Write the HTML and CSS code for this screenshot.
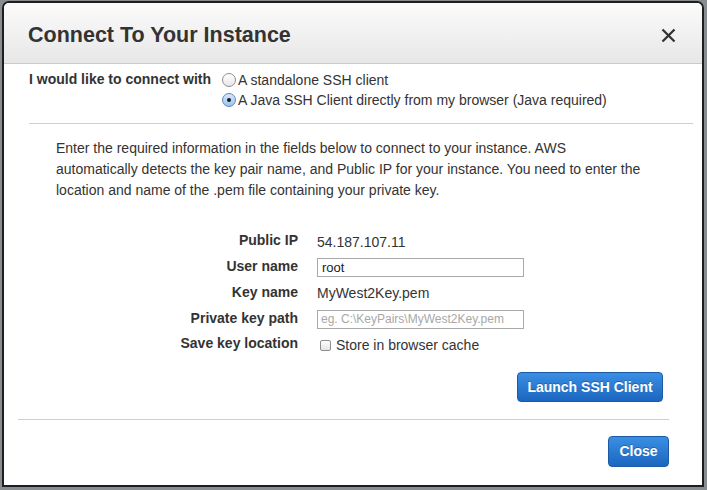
FILE: index.html
```html
<!DOCTYPE html>
<html>
<head>
<meta charset="utf-8">
<link rel="stylesheet" href="styles.css">
</head>
<body>
<div class="dialog">
  <div class="header">
    <h1 class="title">Connect To Your Instance</h1>
    <svg class="close-x" width="15" height="15" viewBox="0 0 15 15"><path d="M1.5 1.5 L13.5 13.5 M13.5 1.5 L1.5 13.5" stroke="#333" stroke-width="2.3" fill="none"/></svg>
  </div>
  <div class="connect-row">
    <div class="connect-label">I would like to connect with</div>
    <div class="radios">
      <label class="radio"><span class="radio-dot"></span>A standalone SSH client</label>
      <label class="radio"><span class="radio-dot checked"></span>A Java SSH Client directly from my browser (Java required)</label>
    </div>
  </div>
  <div class="divider top-divider"></div>
  <p class="intro">Enter the required information in the fields below to connect to your instance. AWS<br>automatically detects the key pair name, and Public IP for your instance. You need to enter the<br>location and name of the .pem file containing your private key.</p>
  <div class="form">
    <div class="flabel">Public IP</div>
    <div class="fvalue">54.187.107.11</div>
    <div class="flabel">User name</div>
    <div class="fvalue"><div class="input">root</div></div>
    <div class="flabel">Key name</div>
    <div class="fvalue">MyWest2Key.pem</div>
    <div class="flabel">Private key path</div>
    <div class="fvalue"><div class="input placeholder">eg. C:\KeyPairs\MyWest2Key.pem</div></div>
    <div class="flabel">Save key location</div>
    <div class="fvalue"><span class="checkbox"></span>Store in browser cache</div>
  </div>
  <div class="launch-row"><button class="btn launch">Launch SSH Client</button></div>
  <div class="divider bottom-divider"></div>
  <div class="footer"><button class="btn close">Close</button></div>
</div>
</body>
</html>
```
FILE: styles.css
```css
html, body {
  margin: 0;
  padding: 0;
}
body {
  width: 707px;
  height: 490px;
  overflow: hidden;
  background: #888d92;
  font-family: "Liberation Sans", Arial, sans-serif;
  color: #333;
}
.dialog {
  box-sizing: border-box;
  margin: 1px 0 0 2px;
  width: 702px;
  height: 486px;
  background: #fff;
  border: 2px solid #1e1e1e;
  border-radius: 7px 7px 0 0;
  overflow: hidden;
}
.header {
  box-sizing: border-box;
  height: 61px;
  display: flex;
  align-items: center;
  padding: 4px 26px 0 24px;
  background: linear-gradient(#fbfbfb, #e7e7e7);
  border-bottom: 1px solid #c9c9c9;
}
.title {
  margin: 0;
  flex: 1;
  font-size: 21.5px;
  font-weight: bold;
  color: #333;
}
.close-x {
  display: block;
  margin-top: 1px;
}
.connect-row {
  display: flex;
  padding: 6px 0 0 25px;
  font-size: 14px;
}
.connect-label {
  width: 193px;
  font-weight: bold;
  line-height: 18px;
}
.radio {
  display: flex;
  align-items: center;
  height: 20px;
  line-height: 20px;
}
.radio-dot {
  box-sizing: border-box;
  width: 14px;
  height: 14px;
  margin-right: 2px;
  border-radius: 50%;
  border: 1px solid #8f8f8f;
  background: linear-gradient(#fff, #e6e6e6);
  display: flex;
  align-items: center;
  justify-content: center;
}
.radio-dot.checked {
  border-color: #5b86c0;
  background: linear-gradient(#d7e8fb, #9cc4ee);
}
.radio-dot.checked::after {
  content: "";
  width: 4px;
  height: 4px;
  border-radius: 50%;
  background: #1a1a1a;
}
.divider {
  height: 1px;
  background: #cfcfcf;
}
.top-divider {
  margin: 13px 9px 0 25px;
}
.intro {
  margin: 14px 0 0 52px;
  font-size: 14px;
  line-height: 21px;
  color: #333;
}
.form {
  display: grid;
  grid-template-columns: 294px 1fr;
  column-gap: 19px;
  grid-auto-rows: 25.75px;
  margin-top: 28px;
  font-size: 14px;
  align-items: center;
}
.flabel {
  text-align: right;
  font-weight: bold;
  margin-top: -3px;
}
.fvalue {
  display: flex;
  align-items: center;
  font-size: 14px;
}
.input {
  box-sizing: border-box;
  width: 207px;
  height: 19px;
  border: 1px solid #a9a9a9;
  padding: 0 4px;
  font-size: 13px;
  line-height: 17px;
  color: #222;
  background: #fff;
}
.input.placeholder {
  color: #a8a8a8;
  font-size: 12px;
  padding-left: 3px;
}
.checkbox {
  box-sizing: border-box;
  width: 11px;
  height: 11px;
  margin: 1px 5px 0 3px;
  border: 1px solid #8e8e8e;
  border-radius: 2px;
  background: linear-gradient(#fff, #e5e5e5);
}
.launch-row {
  display: flex;
  justify-content: flex-end;
  padding: 14px 39px 0 0;
}
.btn {
  box-sizing: border-box;
  font-family: "Liberation Sans", Arial, sans-serif;
  font-weight: bold;
  font-size: 14px;
  color: #fff;
  background: linear-gradient(#3a8fe3, #1b66c0);
  border: 1px solid #1c5aa5;
  border-radius: 4px;
  text-shadow: 0 -1px 0 rgba(0, 0, 0, 0.25);
  padding: 0;
}
.launch {
  width: 146px;
  height: 30px;
}
.bottom-divider {
  margin: 17px 33px 0 14px;
}
.footer {
  display: flex;
  justify-content: flex-end;
  padding: 16px 33px 0 0;
}
.close {
  width: 61px;
  height: 31px;
}
```
